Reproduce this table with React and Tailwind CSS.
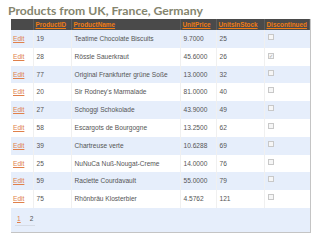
import React from "react";

const products = [
  { id: 19, name: "Teatime Chocolate Biscuits", price: "9.7000", stock: 25, disc: false },
  { id: 28, name: "Rössle Sauerkraut", price: "45.6000", stock: 26, disc: true },
  { id: 77, name: "Original Frankfurter grüne Soße", price: "13.0000", stock: 32, disc: false },
  { id: 20, name: "Sir Rodney's Marmalade", price: "81.0000", stock: 40, disc: false },
  { id: 27, name: "Schoggi Schokolade", price: "43.9000", stock: 49, disc: false },
  { id: 58, name: "Escargots de Bourgogne", price: "13.2500", stock: 62, disc: false },
  { id: 39, name: "Chartreuse verte", price: "10.6288", stock: 69, disc: false },
  { id: 25, name: "NuNuCa Nuß-Nougat-Creme", price: "14.0000", stock: 76, disc: false },
  { id: 59, name: "Raclette Courdavault", price: "55.0000", stock: 79, disc: false },
  { id: 75, name: "Rhönbräu Klosterbier", price: "4.5762", stock: 121, disc: false },
];

const headers = ["ProductID", "ProductName", "UnitPrice", "UnitsInStock", "Discontinued"];

function CheckBox({ checked }) {
  return (
    <span className="inline-flex h-[6px] w-[6px] items-center justify-center border border-[#c8c8c8] bg-[#f6f6f6] text-[5px] leading-none text-[#9a9a9a]">
      {checked ? "✓" : ""}
    </span>
  );
}

export default function App() {
  return (
    <div className="h-[247px] w-[320px] bg-white font-['Liberation_Sans',sans-serif]">
      <h1 className="pl-[8px] pt-[4px] font-['Lato',sans-serif] text-[12.2px] font-bold leading-[14px] text-[#85856e]">
        Products from UK, France, Germany
      </h1>
      <div className="ml-[11px] mt-[1px] w-[300px] border-r border-b border-[#c4c4c4]">
        <table className="w-full table-fixed border-collapse text-[6.6px] text-[#555]">
          <colgroup>
            <col className="w-[22px]" />
            <col className="w-[38px]" />
            <col className="w-[109px]" />
            <col className="w-[36px]" />
            <col className="w-[48px]" />
            <col />
          </colgroup>
          <thead>
            <tr className="h-[11px] bg-[#4a4a4a]">
              <th className="border-r border-[#5c5c5c]"></th>
              {headers.map((h) => (
                <th
                  key={h}
                  className="border-r border-[#5c5c5c] pl-[2px] text-left text-[6.4px] font-bold text-[#f07c14] underline"
                >
                  {h}
                </th>
              ))}
            </tr>
          </thead>
          <tbody>
            {products.map((p, i) => (
              <tr
                key={p.id}
                className={`h-[17.8px] ${i % 2 === 0 ? "bg-[#e6eefb]" : "bg-white"}`}
              >
                <td className="border-r border-[#f0f0f0] pl-[2px] text-[#e0804a] underline">Edit</td>
                <td className="border-r border-[#f0f0f0] pl-[3px]">{p.id}</td>
                <td className="border-r border-[#f0f0f0] overflow-hidden whitespace-nowrap pl-[3px]">{p.name}</td>
                <td className="border-r border-[#f0f0f0] pl-[3px]">{p.price}</td>
                <td className="border-r border-[#f0f0f0] pl-[3px]">{p.stock}</td>
                <td className="pl-[3px] align-top pt-[3px]">
                  <CheckBox checked={p.disc} />
                </td>
              </tr>
            ))}
            <tr className="h-[24px] bg-[#e6eefb]">
              <td colSpan={6} className="pl-[4px]">
                <div className="inline-flex gap-[9px] border-b border-[#d6dce6] px-[2px] pb-[2px]">
                  <span className="text-[#e0804a] underline">1</span>
                  <span>2</span>
                </div>
              </td>
            </tr>
          </tbody>
        </table>
      </div>
    </div>
  );
}
